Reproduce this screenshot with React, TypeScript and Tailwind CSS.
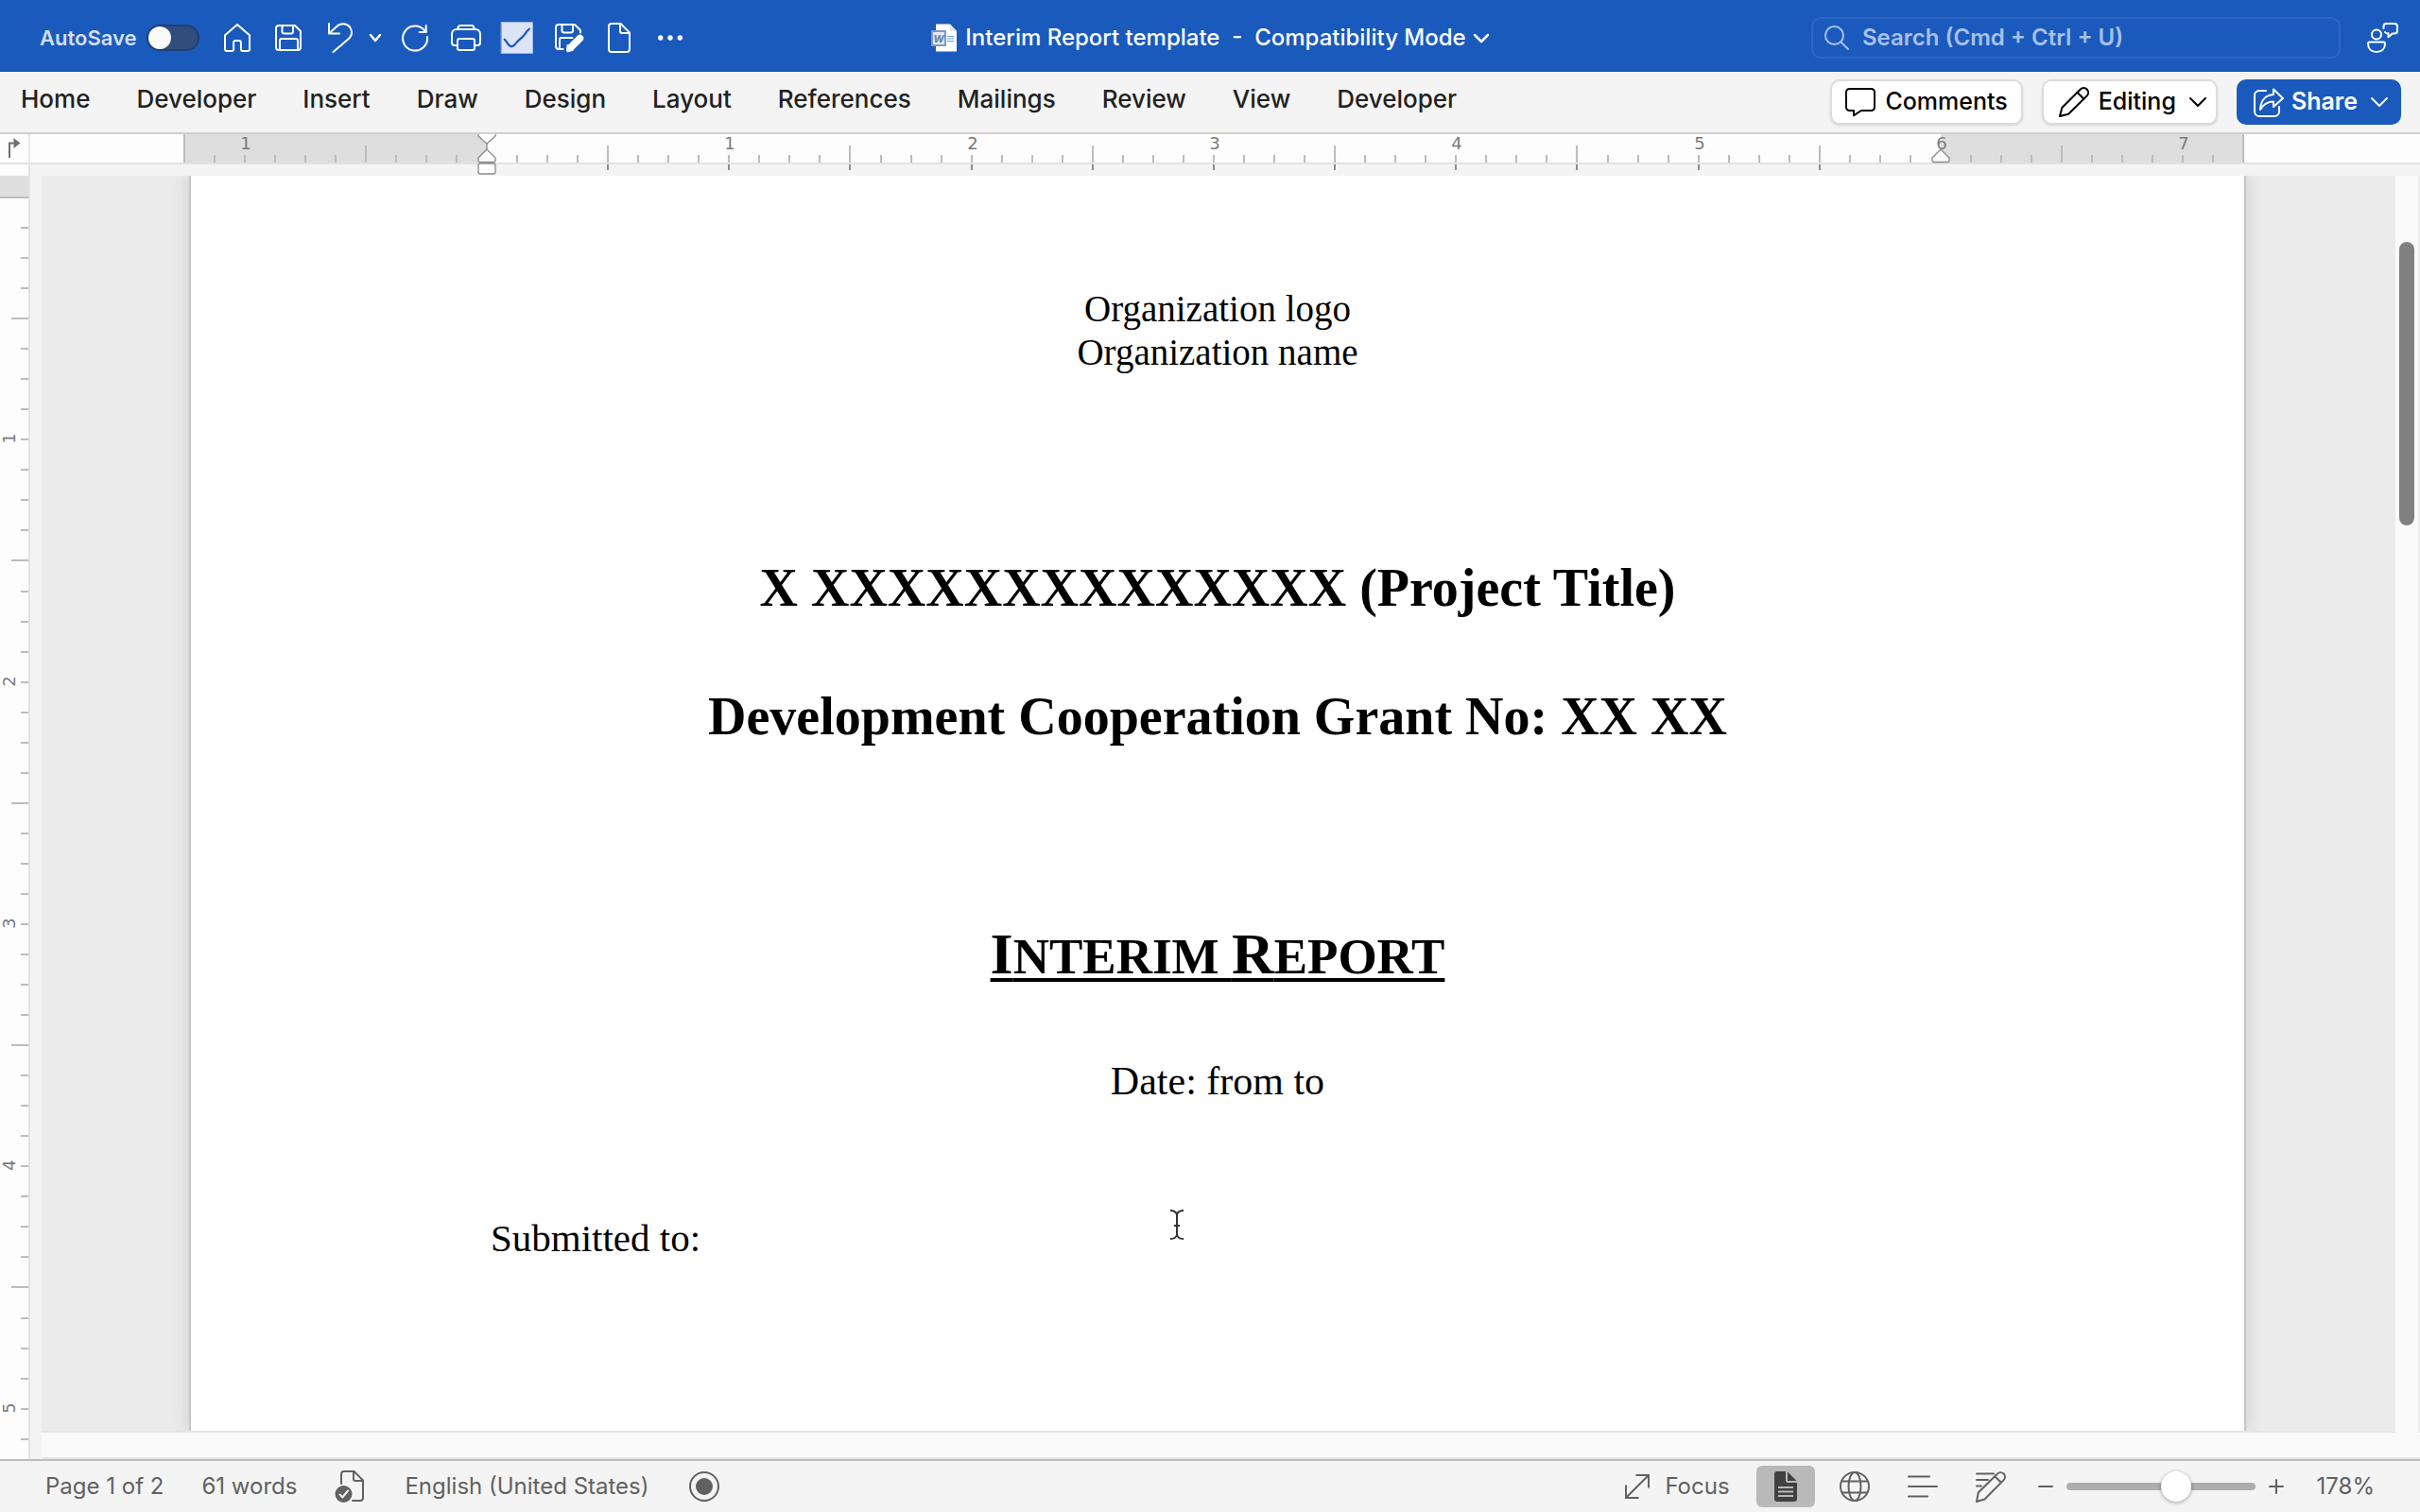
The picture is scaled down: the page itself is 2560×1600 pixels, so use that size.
import React from "react";

type IconProps = { w: number; h: number; sw?: number; children: React.ReactNode };

function Icon({ w, h, sw = 2, children }: IconProps) {
  return (
    <svg
      width={w}
      height={h}
      viewBox={`0 0 ${w} ${h}`}
      fill="none"
      stroke="currentColor"
      strokeWidth={sw}
      strokeLinecap="round"
      strokeLinejoin="round"
      className="shrink-0 overflow-visible"
      aria-hidden="true"
    >
      {children}
    </svg>
  );
}

const Chevron = ({ w, h, sw }: { w: number; h: number; sw: number }) => (
  <Icon w={w} h={h} sw={sw}>
    <path d={`M1 1L${w / 2} ${h - 1}L${w - 1} 1`} />
  </Icon>
);

const HomeIcon = () => (
  <Icon w={28} h={30}>
    <path d="M14 1L1 12.3V27a2 2 0 0 0 2 2h5.3a1.8 1.8 0 0 0 1.8-1.8V20a2 2 0 0 1 2-2h3.8a2 2 0 0 1 2 2v7.2a1.8 1.8 0 0 0 1.8 1.8H25a2 2 0 0 0 2-2V12.3z" />
  </Icon>
);

const SaveIcon = () => (
  <Icon w={28} h={28}>
    <path d="M1 4a3 3 0 0 1 3-3h17l6 6v17a3 3 0 0 1-3 3H4a3 3 0 0 1-3-3z" />
    <path d="M7.5 1v6.5a2 2 0 0 0 2 2H17a2 2 0 0 0 2-2V1M5 27V17a2 2 0 0 1 2-2h15a2 2 0 0 1 2 2v10" />
  </Icon>
);

const UndoIcon = () => (
  <Icon w={26} h={32}>
    <path d="M1 1v10.500h11M1.500 11L9 4.200C13 .3 19.500 .3 23 4.500c3 4 2.600 9-.6 12L5.500 31" />
  </Icon>
);

const RedoIcon = () => (
  <Icon w={28} h={28}>
    <path d="M27 13A13 13 0 1 1 24.300 6.500M25.700 1v7h-7" />
  </Icon>
);

const PrintIcon = () => (
  <Icon w={32} h={28}>
    <path d="M7 22H4a3 3 0 0 1-3-3V10a5 5 0 0 1 5-5h20a5 5 0 0 1 5 5v9a3 3 0 0 1-3 3h-3" />
    <rect x="7" y="15" width="18" height="12" rx="2" />
    <path d="M7.500 5V4a3 3 0 0 1 3-3h11a3 3 0 0 1 3 3v1" />
  </Icon>
);

const TickIcon = () => (
  <Icon w={34} h={34} sw={2.2}>
    <rect x=".5" y=".5" width="33" height="33" fill="#dbe3f5" stroke="#9db4e3" strokeWidth="1" />
    <path d="M3.700 18.700C6 20 7.500 26 11 26.200C14.500 26.500 16 21 20.500 18C25 15 26 10.500 30 7.700" stroke="#1a5abd" />
  </Icon>
);

const SaveAsIcon = () => (
  <Icon w={31} h={30}>
    <path d="M8.500 27H4a3 3 0 0 1-3-3V4a3 3 0 0 1 3-3h17l6 6v2.500" />
    <path d="M7.500 1v6.500a2 2 0 0 0 2 2H17a2 2 0 0 0 2-2V1M5 27V17a2 2 0 0 1 2-2h11.500" />
    <path d="M26.500 15.500L17 25" strokeWidth="7.500" />
    <path d="M13.500 22.500L19.500 28L14.500 29.700a1.500 1.500 0 0 1-2-2z" fill="currentColor" strokeWidth="1" />
  </Icon>
);

const NewFileIcon = () => (
  <Icon w={24} h={32}>
    <path d="M4 1h9.500L23 10.500V28a3 3 0 0 1-3 3H4a3 3 0 0 1-3-3V4a3 3 0 0 1 3-3z" />
    <path d="M13 1v8a2 2 0 0 0 2 2h8" />
  </Icon>
);

const MoreIcon = () => (
  <Icon w={26} h={6} sw={0}>
    <circle cx="2.700" cy="3" r="2.700" fill="currentColor" />
    <circle cx="13" cy="3" r="2.700" fill="currentColor" />
    <circle cx="23.300" cy="3" r="2.700" fill="currentColor" />
  </Icon>
);

const WordFileIcon = () => (
  <svg width="28" height="30" viewBox="0 0 28 30" className="shrink-0" aria-hidden="true">
    <path d="M5 .5h15l7 7.500v21.500H5z" fill="#fff" />
    <path d="M20 .5l7 7.500h-5.500a1.500 1.500 0 0 1-1.500-1.500z" fill="#dfe3ea" />
    <path d="M17 13.500h7M17 16h7M17 18.500h7" stroke="#6f9fe0" strokeWidth="1.200" />
    <rect x="0" y="7" width="16" height="17" fill="#8097c6" />
    <rect x="2" y="9" width="12" height="13" fill="#e4e9f3" />
    <text x="8" y="20" textAnchor="middle" fontFamily="Inter, sans-serif" fontWeight="800" fontStyle="italic" fontSize="11" fill="#6f87b8">
      W
    </text>
  </svg>
);

const SearchIcon = () => (
  <Icon w={26} h={26}>
    <circle cx="10.500" cy="10.500" r="9.500" />
    <path d="M17.500 17.500L25 25" />
  </Icon>
);

const CollabIcon = () => (
  <Icon w={33} h={32}>
    <circle cx="10" cy="12.500" r="5" />
    <path d="M2.500 20.500h15a1.500 1.500 0 0 1 1.500 1.500c0 5.500-3.500 9-9 9s-9-3.500-9-9a1.500 1.500 0 0 1 1.500-1.500z" />
    <path d="M17.500 6V4a3 3 0 0 1 3-3h8.500a3 3 0 0 1 3 3v4.500a3 3 0 0 1-3 3h-2.300l-4.200 3.800v-4a3.500 3.500 0 0 1-3.500-1.300" />
  </Icon>
);

const CommentIcon = () => (
  <Icon w={32} h={30}>
    <path d="M4.500 1h23A3.500 3.500 0 0 1 31 4.500v16a3.500 3.500 0 0 1-3.500 3.500H17l-8 5.200V24H4.500A3.500 3.500 0 0 1 1 20.500v-16A3.500 3.500 0 0 1 4.500 1z" />
  </Icon>
);

const PencilIcon = () => (
  <Icon w={32} h={32}>
    <path d="M1 31l2.300-9L22.800 2.500a5 5 0 0 1 6.900 0a5 5 0 0 1 0 6.900L10 28.700z" />
    <path d="M19.500 5.800l6.900 6.900" />
  </Icon>
);

const ShareIcon = () => (
  <Icon w={32} h={31}>
    <path d="M13 3H6a5 5 0 0 0-5 5v17a5 5 0 0 0 5 5h16a5 5 0 0 0 5-5v-5" />
    <path d="M21 1.500L31 11L21 20v-5.500c-6.500 0-10.500 2.500-14 8.500C7.500 13 13 7.500 21 7z" />
  </Icon>
);

const ProofIcon = () => (
  <Icon w={31} h={34}>
    <path d="M7 14V4a3 3 0 0 1 3-3h10.500L30 10.500V29a3 3 0 0 1-3 3h-8" />
    <path d="M20 1v8a2 2 0 0 0 2 2h8" />
    <circle cx="9.500" cy="25" r="9" fill="currentColor" stroke="none" />
    <path d="M5.500 25.500l2.800 3L14 21.500" stroke="#f4f4f4" />
  </Icon>
);

const RecordIcon = () => (
  <Icon w={32} h={32}>
    <circle cx="16" cy="16" r="15" />
    <circle cx="16" cy="16" r="9" fill="currentColor" stroke="none" />
  </Icon>
);

const ExpandIcon = () => (
  <svg width="26" height="26" viewBox="0 0 26 26" fill="none" stroke="currentColor" strokeWidth="2" className="shrink-0" aria-hidden="true">
    <path d="M11.500 1H25v13.500M25 1L1 25M1 11.500V25h13.500" />
  </svg>
);

const PrintLayoutIcon = () => (
  <svg width="24" height="32" viewBox="0 0 24 32" className="shrink-0" aria-hidden="true">
    <path d="M3 0h9v9.500A2.500 2.500 0 0 0 14.500 12H24v17a3 3 0 0 1-3 3H3a3 3 0 0 1-3-3V3a3 3 0 0 1 3-3z" fill="#414141" />
    <path d="M14 .5L23.500 10H14z" fill="#414141" />
    <path d="M4 17h16M4 21.500h16M4 26h16" stroke="#b9b9b9" strokeWidth="1.800" />
  </svg>
);

const WebIcon = () => (
  <Icon w={32} h={32}>
    <circle cx="16" cy="16" r="15" />
    <ellipse cx="16" cy="16" rx="6.500" ry="15" />
    <path d="M3 10.500h26M3 22.500h26" />
  </Icon>
);

const OutlineIcon = () => (
  <Icon w={32} h={24}>
    <path d="M1 1.500h22M1 12h30M1 22.500h20" />
  </Icon>
);

const DraftIcon = () => (
  <Icon w={32} h={33}>
    <path d="M1 2.500h18M1 9h12M1 15.500h5" />
    <path d="M1 32l1.700-9.500L23 2.500a4.700 4.700 0 0 1 6.600 0a4.700 4.700 0 0 1 0 6.600L9.500 29.500z" />
    <path d="M20.500 5.500l6 6" />
  </Icon>
);

const TabStopIcon = () => (
  <svg width="14" height="22" viewBox="0 0 14 22" aria-hidden="true">
    <path d="M2 21V5.500h6" fill="none" stroke="#707070" strokeWidth="2" />
    <path d="M6.500 0L13.500 5.500L6.500 11z" fill="#707070" />
  </svg>
);

/* Ruler scales: one tick per eighth of an inch. */
const INCH = 256.33;

function range(from: number, to: number) {
  return Array.from({ length: to - from + 1 }, (_, i) => from + i);
}

function HorizontalRuler() {
  const zero = 321;
  const at = (i: number) => Math.round(zero + (i * INCH) / 8);
  return (
    <svg width="2180" height="32" viewBox="0 0 2180 32" className="relative z-10 shrink-0 overflow-visible" aria-hidden="true">
      <rect x="0" y="0" width={zero} height="30" fill="#dedede" />
      <rect x={at(48)} y="0" width={2180 - at(48)} height="30" fill="#dedede" />
      <path d="M1 0V30M2179 0V30" stroke="#bdbdbd" strokeWidth="2" />
      {range(-9, 57).map((i) =>
        i === 0 || i === 48 ? null : (
          <path key={i} d={`M${at(i)} ${Math.abs(i) % 8 === 4 ? 12 : 22}V30`} stroke="#bcbcbc" strokeWidth="2" />
        ),
      )}
      {range(1, 11).map((i) => (
        <path key={i} d={`M${at(i * 4)} 32v6`} stroke="#8c8c8c" strokeWidth="2" />
      ))}
      {[-1, 1, 2, 3, 4, 5, 6, 7].map((n) => (
        <text key={n} x={at(n * 8) + 1} y="16" textAnchor="middle" fontSize="18" fontFamily="'DejaVu Sans', sans-serif" fill="#7a7a7a">
          {Math.abs(n)}
        </text>
      ))}
      <g fill="#fff" stroke="#8a8a8a" strokeWidth="1.300" strokeLinejoin="round">
        <path d={`M${zero - 9} 0v2L${zero} 10L${zero + 9} 2V0`} />
        <path d={`M${zero} 10v6`} />
        <path d={`M${zero} 16L${zero + 9} 25v3a1.500 1.500 0 0 1-1.500 1.500h-15a1.500 1.500 0 0 1-1.500-1.500v-3z`} />
        <rect x={zero - 9} y="31" width="18" height="11" rx="2" />
        <path d={`M${at(48)} 16l9 9v3a1.500 1.500 0 0 1-1.500 1.500h-15a1.500 1.500 0 0 1-1.500-1.500v-3z`} />
      </g>
    </svg>
  );
}

function VerticalRuler() {
  const zero = 35;
  const at = (i: number) => Math.round(zero + (i * INCH) / 8);
  return (
    <svg width="30" height="1370" viewBox="0 0 30 1370" aria-hidden="true">
      <rect x="0" y="12" width="30" height="23" fill="#dedede" />
      <path d={`M0 ${zero}h30`} stroke="#bdbdbd" strokeWidth="2" />
      {range(1, 41).map((i) => (
        <path key={i} d={`M${i % 8 === 4 ? 12 : 22} ${at(i)}H30`} stroke="#bcbcbc" strokeWidth="2" />
      ))}
      {[1, 2, 3, 4, 5].map((n) => (
        <text
          key={n}
          transform={`translate(16 ${at(n * 8) - 1}) rotate(-90)`}
          textAnchor="middle"
          fontSize="18"
          fontFamily="'DejaVu Sans', sans-serif"
          fill="#7a7a7a"
        >
          {n}
        </text>
      ))}
    </svg>
  );
}

const TABS = ["Home", "Developer", "Insert", "Draw", "Design", "Layout", "References", "Mailings", "Review", "View", "Developer"];

function TitleBar() {
  return (
    <header className="grid h-[76px] shrink-0 grid-cols-[1fr_auto_1fr] items-center bg-[#1a5abd] text-white">
      <div className="flex items-center pt-1 pl-[42px]">
        <label htmlFor="autosave" className="text-[22px] font-semibold text-[#d3dff4]">
          AutoSave
        </label>
        <span className="relative ml-2.5 flex h-7 w-14 items-center rounded-full border-2 border-[#1f3f76] bg-[#304d7c]">
          <input id="autosave" type="checkbox" role="switch" className="absolute inset-0 size-full cursor-pointer appearance-none" />
          <span className="pointer-events-none size-6 rounded-full bg-[#fafafa]" />
        </span>
        <button type="button" aria-label="Home" className="ml-[26px]"><HomeIcon /></button>
        <button type="button" aria-label="Save" className="ml-[26px]"><SaveIcon /></button>
        <button type="button" aria-label="Undo" className="ml-7"><UndoIcon /></button>
        <button type="button" aria-label="Undo history" className="ml-[18px]"><Chevron w={12} h={8} sw={2.5} /></button>
        <button type="button" aria-label="Redo" className="ml-[22px]"><RedoIcon /></button>
        <button type="button" aria-label="Print" className="ml-6"><PrintIcon /></button>
        <button type="button" aria-label="Spelling" className="ml-[21px]"><TickIcon /></button>
        <button type="button" aria-label="Save as" className="ml-[23px]"><SaveAsIcon /></button>
        <button type="button" aria-label="New document" className="ml-[25px]"><NewFileIcon /></button>
        <button type="button" aria-label="More commands" className="ml-[29px]"><MoreIcon /></button>
      </div>
      <button type="button" className="flex items-center gap-2 pt-1 text-[24px] font-medium">
        <WordFileIcon />
        <span className="whitespace-pre">Interim Report template  -  Compatibility Mode</span>
        <Chevron w={16} h={9} sw={2.5} />
      </button>
      <div className="flex items-center justify-end gap-7 pt-1 pr-[23px]">
        <label className="flex h-11 w-[560px] items-center gap-3.5 rounded-[10px] border-2 border-[#2c67c3] pl-3 text-[#a9c0e8]">
          <SearchIcon />
          <input
            type="search"
            aria-label="Search"
            placeholder="Search (Cmd + Ctrl + U)"
            className="w-full bg-transparent text-[24px] font-semibold outline-none placeholder:text-[#a9c0e8] placeholder:opacity-100"
          />
        </label>
        <button type="button" aria-label="Collaborators"><CollabIcon /></button>
      </div>
    </header>
  );
}

function TabBar() {
  return (
    <div className="flex h-[66px] shrink-0 items-center justify-between border-b-2 border-[#d2d0ce] bg-[#f4f4f4] pr-5 pl-[22px] text-[#222]">
      <nav className="flex gap-[49px] pb-2 text-[26px] font-medium">
        {TABS.map((t, i) => (
          <button type="button" key={i}>{t}</button>
        ))}
      </nav>
      <div className="flex gap-5 text-[25px] font-medium text-black">
        <button type="button" className="flex h-12 items-center gap-2.5 rounded-[10px] border-2 border-[#dcdcdc] bg-white px-3.5 shadow-sm">
          <CommentIcon />
          Comments
        </button>
        <button type="button" className="flex h-12 items-center gap-2.5 rounded-[10px] border-2 border-[#dcdcdc] bg-white pr-2.5 pl-4 shadow-sm">
          <PencilIcon />
          Editing
          <span className="ml-1"><Chevron w={18} h={10} sw={2} /></span>
        </button>
        <button type="button" className="flex h-12 items-center gap-2 rounded-[10px] bg-[#1a5abd] pr-3.5 pl-[18px] font-semibold text-white">
          <ShareIcon />
          Share
          <span className="ml-1.5"><Chevron w={18} h={10} sw={2} /></span>
        </button>
      </div>
    </div>
  );
}

function Page() {
  return (
    <article className="relative w-[2176px] shrink-0 border-x-2 border-[#c6c6c6] bg-white px-[317px] pt-[118px] text-center font-['Liberation_Serif',serif] text-black shadow-[0_0_18px_rgba(0,0,0,0.14)]">
      <p className="text-[39px] leading-[46px]">Organization logo</p>
      <p className="text-[39px] leading-[46px]">Organization name</p>
      <h1 className="mt-[194px] text-[56px] leading-[64px] font-bold">X XXXXXXXXXXXXXX (Project Title)</h1>
      <h2 className="mt-[72px] text-[56px] leading-[64px] font-bold">Development Cooperation Grant No: XX XX</h2>
      <h2 className="mt-[183px] text-[62px] leading-[72px] font-bold">
        <span className="underline decoration-4 underline-offset-[5px] [text-decoration-skip-ink:none]">
          I<span className="text-[53px]">NTERIM </span>R<span className="text-[53px]">EPORT</span>
        </span>
      </h2>
      <p className="mt-[72px] text-[42px] leading-[48px]">Date: from to</p>
      <p className="mt-[118px] text-left text-[41px] leading-[48px]">Submitted to:</p>
      <svg width="16" height="32" viewBox="0 0 16 32" fill="none" stroke="#333" strokeWidth="2" className="absolute top-[1094px] left-[1035px]" aria-hidden="true">
        <path d="M1 1c4 0 6 1.500 7 4c1-2.500 3-4 7-4M8 5v22M1 31c4 0 6-1.500 7-4c1 2.500 3 4 7 4M5 17h6" />
      </svg>
    </article>
  );
}

function StatusBar() {
  return (
    <footer className="flex h-[56px] shrink-0 items-center justify-between border-t-2 border-[#bdbdbd] bg-[#f4f4f4] px-12 text-[24px] text-[#616161]">
      <div className="flex items-center">
        <button type="button">Page 1 of 2</button>
        <button type="button" className="ml-10">61 words</button>
        <button type="button" aria-label="Proofing" className="ml-10"><ProofIcon /></button>
        <button type="button" className="ml-[43px]">English (United States)</button>
        <button type="button" aria-label="Record macro" className="ml-[42px]"><RecordIcon /></button>
      </div>
      <div className="flex items-center">
        <button type="button" className="flex items-center gap-4">
          <ExpandIcon />
          Focus
        </button>
        <button type="button" aria-label="Print layout" className="ml-7 flex h-11 w-[62px] items-center justify-center rounded-md bg-[#b9b9b9]">
          <PrintLayoutIcon />
        </button>
        <button type="button" aria-label="Web layout" className="ml-[26px]"><WebIcon /></button>
        <button type="button" aria-label="Outline" className="ml-10"><OutlineIcon /></button>
        <button type="button" aria-label="Draft" className="ml-10"><DraftIcon /></button>
        <button type="button" aria-label="Zoom out" className="ml-[34px]">
          <Icon w={16} h={16}><path d="M1 8h14" /></Icon>
        </button>
        <input
          type="range"
          aria-label="Zoom"
          aria-valuetext="178%"
          min={0}
          max={100}
          defaultValue={60}
          className="mx-3.5 h-8 w-[200px] appearance-none bg-transparent [&::-webkit-slider-runnable-track]:h-2 [&::-webkit-slider-runnable-track]:rounded-full [&::-webkit-slider-runnable-track]:bg-[#adadad] [&::-webkit-slider-thumb]:-mt-3 [&::-webkit-slider-thumb]:size-8 [&::-webkit-slider-thumb]:appearance-none [&::-webkit-slider-thumb]:rounded-full [&::-webkit-slider-thumb]:bg-white [&::-webkit-slider-thumb]:shadow-[0_1px_4px_rgba(0,0,0,0.35)]"
        />
        <button type="button" aria-label="Zoom in">
          <Icon w={16} h={16}><path d="M1 8h14M8 1v14" /></Icon>
        </button>
        <button type="button" className="ml-[35px]">178%</button>
      </div>
    </footer>
  );
}

export default function App() {
  return (
    <div className="flex h-screen flex-col overflow-hidden bg-[#f4f4f4] font-['Inter',sans-serif]">
      <TitleBar />
      <TabBar />
      <div className="flex h-8 shrink-0 border-b-2 border-[#e2e2e2] bg-[#fdfdfd]">
        <div className="flex w-8 shrink-0 justify-center border-r-2 border-[#e9e9e9] pt-1"><TabStopIcon /></div>
        <div className="flex flex-1 justify-center pr-6"><HorizontalRuler /></div>
      </div>
      <div className="flex min-h-0 flex-1">
        <div className="w-8 shrink-0 overflow-hidden border-r-2 border-[#e2e2e2] bg-[#fdfdfd]"><VerticalRuler /></div>
        <main className="flex min-w-0 flex-1 flex-col pt-3 pl-3">
          <div className="flex min-h-0 flex-1">
            <div className="flex min-w-0 flex-1 justify-center overflow-hidden border-b-2 border-[#e5e5e5] bg-[#ebebeb]">
              <Page />
            </div>
            <div className="flex w-7 shrink-0 justify-center border-x-2 border-[#ececec] bg-[#fafafa] pt-[70px]">
              <div className="h-[300px] w-4 rounded-full bg-[#808080]" />
            </div>
          </div>
          <div className="h-7 shrink-0 border-b-2 border-[#e6e6e6] bg-[#fafafa]" />
        </main>
      </div>
      <StatusBar />
    </div>
  );
}
